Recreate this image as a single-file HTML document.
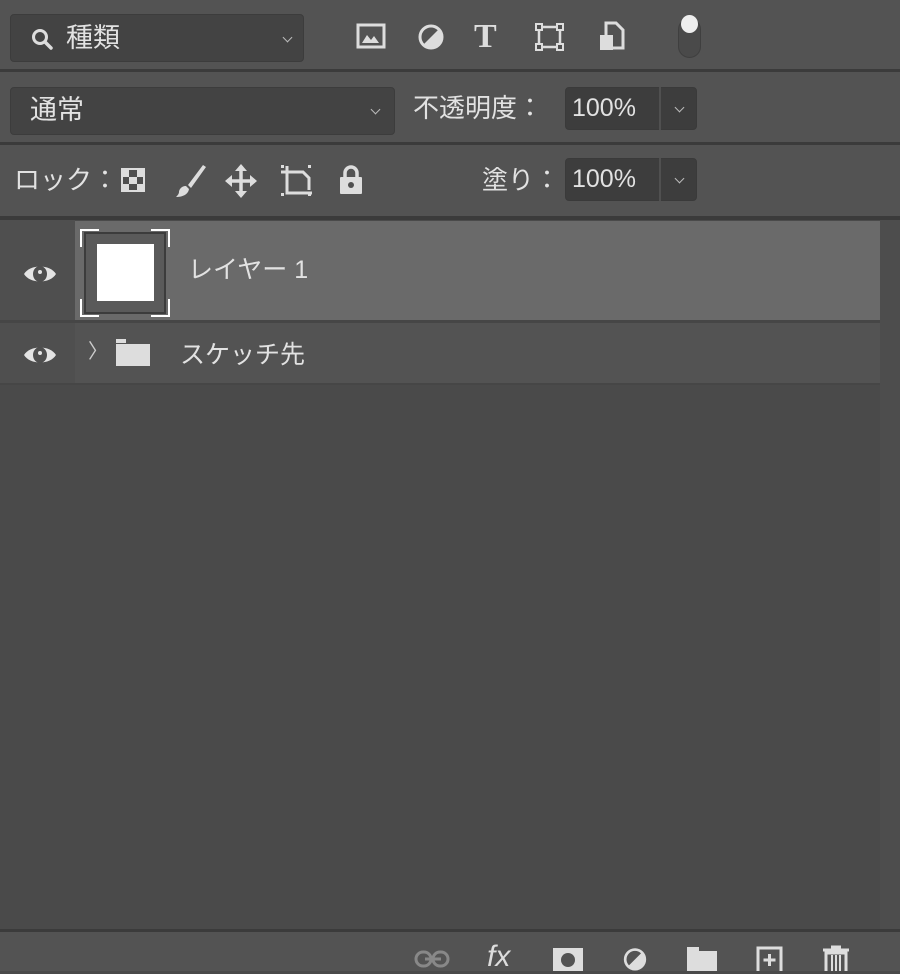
<!DOCTYPE html>
<html><head><meta charset="utf-8"><style>
*{margin:0;padding:0;box-sizing:border-box}
body{width:900px;height:971px;background:#4a4a4a;font-family:"Liberation Sans","Noto Sans CJK JP",sans-serif;color:#e0e0e0;position:relative;overflow:hidden}
.a{position:absolute}
.box{position:absolute;background:#434343;border:1px solid #3c3c3c;border-radius:4px}
.sep{position:absolute;left:0;width:900px;height:3px;background:#3b3b3b}
.chev{position:absolute;width:7px;height:7px;border-right:1.3px solid #bbb;border-bottom:1.3px solid #bbb;transform:rotate(45deg)}
.t{position:absolute;font-size:26px;line-height:30px;color:#e2e2e2}
</style></head><body>
<div class="a" style="left:0;top:0;width:900px;height:218px;background:#535353"></div>
<div class="sep" style="top:69px"></div>
<div class="sep" style="top:142px"></div>
<div class="sep" style="top:216px;height:4px"></div>

<div class="box" style="left:10px;top:14px;width:294px;height:48px"></div>
<svg class="a" style="left:30px;top:27px" width="26" height="26" viewBox="0 0 26 26"><circle cx="10" cy="10" r="6.5" fill="none" stroke="#ddd" stroke-width="3"/><path d="M15 15l6 6" stroke="#ddd" stroke-width="3.5" stroke-linecap="round"/></svg>
<div class="t" style="left:66px;top:23px;font-size:27px">種類</div>
<div class="chev" style="left:284px;top:34px"></div>
<svg class="a" style="left:356px;top:22px" width="32" height="30" viewBox="0 0 32 30"><rect x="2" y="3" width="26" height="22" fill="none" stroke="#ddd" stroke-width="3"/><path d="M6 21l5-8 4 5 3-4 5 7z" fill="#ddd"/></svg>
<svg class="a" style="left:416px;top:22px" width="30" height="30" viewBox="0 0 30 30"><circle cx="15" cy="15" r="11" fill="none" stroke="#ddd" stroke-width="3"/><path d="M23 7A11 11 0 0 1 7 23z" fill="#ddd"/></svg>
<div class="a" style="left:474px;top:18px;font:bold 34px 'Liberation Serif',serif;color:#ddd">T</div>
<svg class="a" style="left:534px;top:22px" width="32" height="30" viewBox="0 0 32 30"><rect x="5" y="5" width="21" height="20" fill="none" stroke="#ddd" stroke-width="2.5"/><g fill="#4f4f4f" stroke="#ddd" stroke-width="2"><rect x="2" y="2" width="6" height="6"/><rect x="23" y="2" width="6" height="6"/><rect x="2" y="22" width="6" height="6"/><rect x="23" y="22" width="6" height="6"/></g></svg>
<svg class="a" style="left:598px;top:21px" width="28" height="32" viewBox="0 0 28 32"><path d="M8 2h10l7 7v18H8z" fill="none" stroke="#ddd" stroke-width="3"/><rect x="2" y="14" width="13" height="15" fill="#ddd"/></svg>
<div class="a" style="left:678px;top:18px;width:23px;height:40px;border:1px solid #3f3f3f;border-radius:12px;background:#4a4a4a"></div>
<div class="a" style="left:681px;top:15px;width:17px;height:18px;border-radius:50%;background:#eee"></div>

<div class="box" style="left:10px;top:87px;width:385px;height:48px"></div>
<div class="t" style="left:30px;top:95px;font-size:27px">通常</div>
<div class="chev" style="left:372px;top:106px"></div>
<div class="t" style="left:413px;top:93px">不透明度：</div>
<div class="box" style="left:565px;top:87px;width:132px;height:43px;background:#3d3d3d;border-color:#3a3a3a"></div>
<div class="a" style="left:659px;top:87px;width:2px;height:43px;background:#505050"></div>
<div class="t" style="left:572px;top:93px;font-size:25px">100%</div>
<div class="chev" style="left:676px;top:104px"></div>

<div class="t" style="left:14px;top:165px">ロック：</div>
<svg class="a" style="left:119px;top:166px" width="28" height="28" viewBox="0 0 28 28"><rect x="2" y="2" width="24" height="24" fill="#ddd"/><g fill="#4f4f4f"><rect x="10" y="4" width="8" height="7"/><rect x="4" y="11" width="6" height="7"/><rect x="18" y="11" width="6" height="7"/><rect x="10" y="18" width="8" height="6"/></g></svg>
<svg class="a" style="left:172px;top:163px" width="36" height="36" viewBox="0 0 36 36"><path d="M31 2L16 22l3 3L34 4z" fill="#ddd"/><path d="M14 23c-5 0-7 4-7 6 0 2-2 4-3 5 6 0 12-2 13-8z" fill="#ddd"/></svg>
<svg class="a" style="left:224px;top:163px" width="34" height="36" viewBox="0 0 34 36"><path d="M17 3v30M3 18h28" stroke="#ddd" stroke-width="3.5"/><path d="M17 1l-6 7h12zM17 35l-6-7h12zM1 18l7-6v12zM33 18l-7-6v12z" fill="#ddd"/></svg>
<svg class="a" style="left:278px;top:164px" width="38" height="34" viewBox="0 0 38 34"><path d="M9 2v27h25M3 8h22l6 6v12" fill="none" stroke="#ddd" stroke-width="3"/><g fill="#ddd"><rect x="3" y="1" width="3" height="3"/><rect x="30" y="1" width="3" height="3"/><rect x="3" y="29" width="3" height="3"/><rect x="30" y="29" width="3" height="3"/></g></svg>
<svg class="a" style="left:337px;top:164px" width="28" height="32" viewBox="0 0 28 32"><path d="M8 14V9a6 6 0 0 1 12 0v5" fill="none" stroke="#ddd" stroke-width="3.5"/><rect x="3" y="13" width="22" height="17" rx="1" fill="#ddd"/><circle cx="14" cy="21" r="3" fill="#4f4f4f"/></svg>
<div class="t" style="left:482px;top:165px">塗り：</div>
<div class="box" style="left:565px;top:158px;width:132px;height:43px;background:#3d3d3d;border-color:#3a3a3a"></div>
<div class="a" style="left:659px;top:158px;width:2px;height:43px;background:#505050"></div>
<div class="t" style="left:572px;top:164px;font-size:25px">100%</div>
<div class="chev" style="left:676px;top:175px"></div>

<div class="a" style="left:0;top:220px;width:75px;height:164px;background:#4f4f4f"></div>
<div class="a" style="left:75px;top:221px;width:805px;height:99px;background:#6a6a6a"></div>
<div class="a" style="left:0;top:320px;width:880px;height:3px;background:#464646"></div>
<div class="a" style="left:75px;top:323px;width:805px;height:60px;background:#535353"></div>
<div class="a" style="left:0;top:383px;width:880px;height:2px;background:#464646"></div>
<div class="a" style="left:880px;top:220px;width:20px;height:710px;background:#4d4d4d"></div>

<svg class="a" style="left:22px;top:262px" width="36" height="24" viewBox="0 0 36 24"><path d="M2 12C8 2 28 2 34 12 28 22 8 22 2 12z" fill="#e4e4e4"/><ellipse cx="18" cy="12" rx="7" ry="8" fill="#4f4f4f"/><circle cx="18" cy="10" r="2" fill="#e4e4e4"/></svg>
<svg class="a" style="left:22px;top:343px" width="36" height="24" viewBox="0 0 36 24"><path d="M2 12C8 2 28 2 34 12 28 22 8 22 2 12z" fill="#e4e4e4"/><ellipse cx="18" cy="12" rx="7" ry="8" fill="#4f4f4f"/><circle cx="18" cy="10" r="2" fill="#e4e4e4"/></svg>

<svg class="a" style="left:78px;top:227px" width="94" height="92" viewBox="0 0 94 92">
<rect x="7" y="6" width="80" height="80" fill="#5a5a5a" stroke="#3c3c3c" stroke-width="2"/>
<rect x="19" y="17" width="57" height="57" fill="#fff"/>
<path d="M3 20V3h18M73 3h18v17M3 72v17h18M73 89h18V72" fill="none" stroke="#fff" stroke-width="2"/>
</svg>
<div class="t" style="left:188px;top:255px;font-size:25px">レイヤー 1</div>

<div class="a" style="left:88px;top:345px;width:9px;height:14px;font-size:20px;line-height:14px;color:#ccc">〉</div>
<svg class="a" style="left:114px;top:338px" width="38" height="30" viewBox="0 0 38 30"><rect x="2" y="1" width="10" height="4" fill="#ddd"/><rect x="2" y="6" width="34" height="22" fill="#ddd"/></svg>
<div class="t" style="left:180px;top:340px;font-size:25px">スケッチ先</div>

<div class="a" style="left:0;top:929px;width:900px;height:3px;background:#3b3b3b"></div>
<div class="a" style="left:0;top:932px;width:900px;height:39px;background:#535353"></div>
<svg class="a" style="left:413px;top:948px" width="40" height="23" viewBox="0 0 40 23"><rect x="3" y="4" width="15" height="14" rx="7" fill="none" stroke="#888" stroke-width="3"/><rect x="20" y="4" width="15" height="14" rx="7" fill="none" stroke="#888" stroke-width="3"/><path d="M12 11h16" stroke="#888" stroke-width="3"/></svg>
<div class="a" style="left:487px;top:940px;font:italic 30px 'Liberation Sans',sans-serif;color:#ddd">fx</div>
<svg class="a" style="left:552px;top:946px" width="32" height="25" viewBox="0 0 32 25"><rect x="1" y="2" width="30" height="26" fill="#ddd"/><circle cx="16" cy="14" r="7" fill="#535353"/></svg>
<svg class="a" style="left:621px;top:946px" width="28" height="25" viewBox="0 0 28 28"><circle cx="14" cy="15" r="11" fill="none" stroke="#ddd" stroke-width="3"/><path d="M22 7A11 11 0 0 1 6 23z" fill="#ddd"/></svg>
<svg class="a" style="left:686px;top:946px" width="32" height="25" viewBox="0 0 32 25"><rect x="1" y="1" width="12" height="4" fill="#ddd"/><rect x="1" y="5" width="30" height="22" fill="#ddd"/></svg>
<svg class="a" style="left:755px;top:946px" width="30" height="25" viewBox="0 0 30 25"><rect x="3" y="2" width="23" height="26" fill="none" stroke="#ddd" stroke-width="3"/><path d="M14.5 8v12M8.5 14h12" stroke="#ddd" stroke-width="3"/></svg>
<svg class="a" style="left:820px;top:944px" width="32" height="27" viewBox="0 0 32 27"><path d="M11 3h10M3 6h26" stroke="#ddd" stroke-width="3"/><path d="M6 9h20v20H6z" fill="none" stroke="#ddd" stroke-width="3"/><path d="M12 11v16M16 11v16M20 11v16" stroke="#ddd" stroke-width="2"/></svg>
</body></html>
